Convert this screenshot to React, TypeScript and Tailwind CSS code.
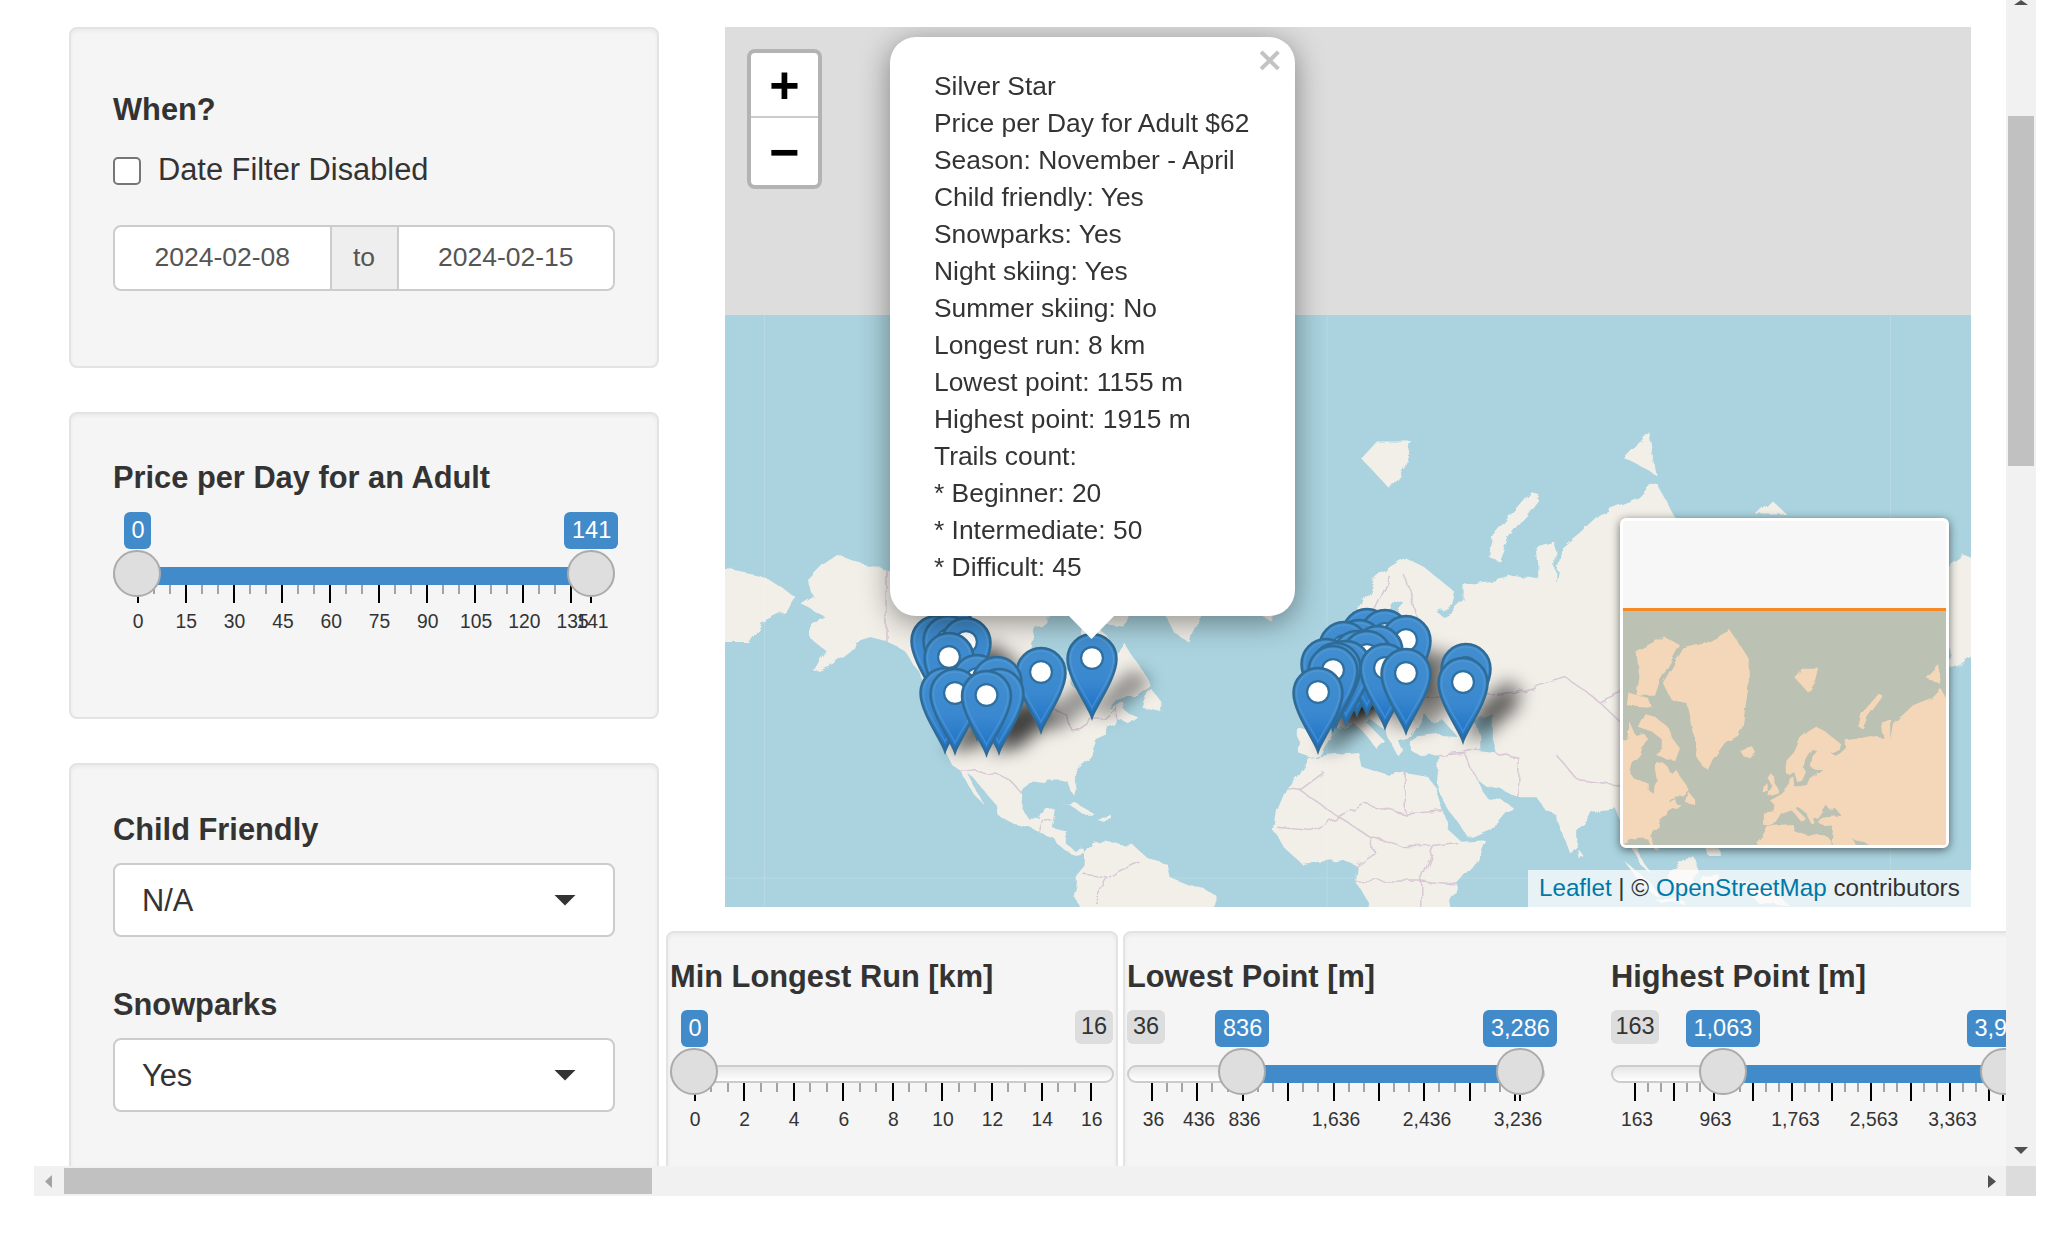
import React from "react";

type Pt = [number, number];

const LAND: Pt[][] = [
  // north america
  [[-168,65.5],[-164,66.5],[-166,68.5],[-161,70.3],[-156.5,71.3],[-150,70.5],[-141,69.7],[-135,69.3],[-128,70],[-120,69.5],[-115,68],[-108,68],[-100,68],[-96,68],[-94,72],[-90,69],[-85,69.5],[-82,68],[-86,66],[-88,64],[-93,62],[-94.5,59],[-92,57],[-85,55.3],[-82,55],[-82,52.5],[-79.5,51.3],[-79,54.5],[-77,56.5],[-78,60],[-78,62.5],[-73,62],[-70,60.8],[-68,58.5],[-65,60],[-62,57.5],[-58,54.5],[-56,52],[-60,50],[-66,50],[-70,47],[-65,49],[-64.5,47],[-61,46],[-64,44.5],[-67,45],[-70,43.5],[-70.5,41.7],[-74,40.5],[-75.5,37.5],[-76,35],[-81,31.5],[-80,27],[-80.5,25.2],[-82,27],[-83,29.5],[-85.5,30],[-89.5,30],[-90,29],[-94,29.5],[-97.3,27.5],[-97.7,22],[-95.5,18.7],[-92,18.5],[-90.5,21],[-87,21.5],[-88,16],[-83.5,15],[-83.5,11],[-81,9],[-78,9.4],[-77.3,8],[-80,7.5],[-83,8.3],[-85.5,10],[-87.5,13],[-92,14.5],[-95,16],[-100,17],[-105,19.5],[-105.5,22.5],[-109,26],[-112.5,30],[-114.7,31.5],[-112,27],[-109.8,23],[-112,25],[-115,29],[-117.2,32.5],[-120.5,34.5],[-122.5,37.8],[-124.3,40.5],[-124,46],[-123,49],[-128,52],[-130.5,55],[-135,58.5],[-140,60],[-146,60.8],[-151,60],[-152,58.5],[-158,56],[-164,54.7],[-160,58.5],[-165,60.5],[-165,63],[-161,64]],
  // arctic islands
  [[-62,66],[-65,62.5],[-70,62.8],[-78,64.5],[-73,66],[-73,68],[-80,70],[-89,71],[-85,73.5],[-78,73],[-70,71],[-67,68.5]],
  [[-117,69.5],[-105,68.7],[-101,69.5],[-105,73],[-115,73],[-118,71]],
  [[-125,72],[-120,71.5],[-116,73.5],[-122,74.5]],
  [[-90,76.5],[-78,76.5],[-75,78.5],[-62,82.3],[-72,83],[-90,81.8],[-88,79]],
  [[-96,75],[-80,74.7],[-82,76],[-95,77]],
  [[-117,75.5],[-106,75],[-105,76.5],[-116,76.5]],
  // greenland
  [[-73,78.3],[-68,76],[-58,75.5],[-54,70],[-51,67],[-52,64],[-48,61],[-44,60],[-41,63],[-33,67.5],[-25,69],[-22,71],[-20,75],[-18,78],[-18,81],[-30,83.5],[-45,82.5],[-60,82]],
  [[-59,47.7],[-53,46.8],[-53,49],[-56,51.5],[-58,49.5]],
  [[-24,65.5],[-22,64],[-18.5,63.4],[-14,65],[-16,66.5],[-21,66]],
  [[-85,22],[-80,23],[-74.5,20.2],[-78,20],[-82,22.5]],
  [[-74,19],[-69,19.5],[-68.5,18.5],[-72,18]],
  // south america
  [[-77.3,8],[-75,11],[-71.5,12.4],[-68,11],[-62,10.5],[-57,6],[-51,4.5],[-50,0],[-44,-2.5],[-39,-3.5],[-35,-6],[-35,-9],[-39,-14],[-76,-14],[-81,-6],[-80,-2],[-80,1],[-77.5,4]],
  // africa
  [[-6,35.8],[3,36.9],[10,37.3],[11,33.5],[20,31],[25,32],[32,31],[34.5,28],[37,21],[39,15],[43,11.5],[51,12],[48,5],[42,-2],[39,-7],[40.5,-15],[12,-17],[13.5,-8],[9,-1],[9.5,4],[5,6],[-4,5],[-8,4.5],[-13,9],[-17,14.7],[-16,21],[-13,27.5],[-9.5,31]],
  // eurasia
  [[-9,43],[-1.5,43.5],[-1,46],[-4.5,48.3],[-1,49.5],[3,51],[7,53.5],[8.5,55],[8.5,57],[10.5,57.5],[11,54],[14,54],[19,54.5],[21,57],[24,58],[29,60],[23,60],[21,61],[22,64],[25,65.5],[22,65.8],[18,63],[17,60.5],[18.5,59],[16,56],[13,55.5],[11,59],[8,58],[5,59],[5,62],[11,65],[15,68.5],[20,70],[25,71],[31,70],[41,67],[40,65.5],[35,64.5],[37,63.9],[40,64.5],[44,66],[44,68],[54,68.5],[60,69],[68,68.5],[67,72],[73,72.5],[73,68],[75,72],[81,73.5],[87,75],[100,76.3],[105,77.5],[113,74],[128,72.5],[132,71.5],[140,72.5],[150,71.5],[160,70],[170,69.7],[180,69],[190,66.5],[187,64.7],[179,63],[175,60],[165,60],[162,56],[156.5,51],[156,57],[160,61.5],[155,59.5],[143,59.5],[135,54.5],[141,53],[136,45],[130,42.5],[127.5,39.5],[129.5,37],[126.5,34.5],[125,39.5],[121,39],[118,39],[122,37],[119,35],[122,31],[120,26],[114,22.5],[108,21.5],[106,19],[109,13],[105,9],[100,13.5],[100,7],[103.5,1.5],[100.5,4],[98,9],[98,16],[94.5,16],[92,22],[87,21.5],[80,15],[80,11],[77.5,8],[73,20],[70,21],[67,25],[61,25],[56.5,27],[51,28],[48,30],[51,25],[56,24],[59.5,22],[55,17],[45,13],[43,16],[39,21],[35,28],[36,36.5],[30,36.3],[26.5,38],[26.5,40],[29,41],[36,41.5],[41.5,41.3],[37,45],[33.5,44.5],[31,46.5],[28,43],[26,40.7],[23,40],[24,38],[22.5,36.5],[19.5,41],[19,42.5],[14,45],[12.5,44.5],[18.5,40],[16,38],[12,42],[8.5,44.3],[3,43],[0,39.5],[-2,36.8],[-5.5,36],[-9,37]],
  [[-5.5,50],[1,51.2],[1.5,52.8],[-1.5,55],[-2,57.5],[-4,58.6],[-6,57],[-3,54],[-5,52]],
  [[-10,52],[-6,52.2],[-6,55],[-9,54.5]],
  [[11,79],[20,77],[25,78.5],[27,80],[16,80]],
  [[52,71],[55,70.7],[58,73],[68,76.5],[65,76.8],[54,73.5]],
  [[95,79],[105,78],[103,80.5]],
  [[137,75],[147,75],[142,76.2]],
  [[142,46],[144,49],[143,54],[142,53]],
  [[130,31.5],[132,34],[136,35],[140,35],[142,40],[141,41.5],[139,38],[133,35.5],[130,33.5]],
  [[140,42],[145,43.5],[142,45.5]],
  [[120,14],[122,18],[124,13],[126,7],[122,7]],
  [[109,1],[117,7],[119,1],[116,-4],[110,-3]],
  [[95,5.5],[104,-2],[106,-6],[101,-3]],
  [[105,-6.5],[114,-7],[114,-8.5],[106,-7.5]],
  [[120,1],[125,1.5],[122,-4],[120,-5]],
  [[131,-1],[141,-2.5],[148,-9],[138,-8]],
  [[80,9.5],[82,7],[80.5,6]],
  [[121,25],[122,24],[120.5,22]],
];

const CASPIAN: Pt[] = [[47,45],[53,46.5],[53,40],[54,37],[49,37.5],[49,41]];

const BORDERS: Pt[][] = [
  [[-123,49],[-95,49],[-89,48],[-83,46],[-82,43],[-79,43],[-75,45],[-71,45],[-67,47.5],[-67,45]],
  [[-141,69.7],[-141,60]],
  [[-117,32.5],[-106,31.7],[-101,29.5],[-97.5,26]],
  [[-92,14.5],[-91,18],[-88,18]],
  [[-13,27.5],[-8.7,27],[-1,32]],
  [[-8.7,27],[4,19],[12,23],[25,20],[25,32]],
  [[25,20],[37,21]],
  [[-16,16],[-5,15],[4,19]],
  [[4,19],[14,13],[15,8],[9,4]],
  [[14,13],[24,10],[34,10],[42,11]],
  [[34,10],[30,0],[30,-10]],
  [[9,-1],[30,-1],[42,-2]],
  [[12,59],[14,64],[20,69]],
  [[25,69],[30,62],[28,60]],
  [[2,51],[7,49],[8,47.5],[13,47.5],[17,48],[22,48],[28,45]],
  [[7,49],[7,53.5]],
  [[14,54],[15,51],[17,48]],
  [[24,54],[24,50],[22,48]],
  [[24,54],[28,56],[28,60]],
  [[-1.5,43],[3,42.5]],
  [[24,50],[30,50],[40,50],[38,47]],
  [[47,50],[60,51],[76,54],[87,49]],
  [[87,49],[98,52],[116,50],[120,47],[112,43],[96,43],[87,49]],
  [[74,36],[80,30],[97,28]],
  [[44,37],[46,33],[48,30]],
  [[61,25],[61,36],[54,37]],
  [[36,36.5],[44,37],[49,38]],
  [[-70,0],[-67,2],[-60,5]],
  [[-70,0],[-74,-8]],
  [[-78,1],[-70,0]],
];

type Proj = (p: Pt) => Pt;

// web mercator with the given pixels per world and origin
function mercator(world: number, x0: number, y0: number): Proj {
  return ([lon, lat]) => {
    const m = Math.log(Math.tan(Math.PI / 4 + (lat * Math.PI) / 360));
    return [x0 + (lon / 360) * world, y0 - (m * world) / (2 * Math.PI)];
  };
}

function toPath(points: Pt[], proj: Proj, dx: number, close: boolean) {
  const d = points
    .map((p, i) => {
      const [x, y] = proj([p[0] + dx, p[1]]);
      return `${i === 0 ? "M" : "L"}${x.toFixed(1)} ${y.toFixed(1)}`;
    })
    .join("");
  return close ? d + "Z" : d;
}

// pin tips in page coordinates, sorted so southern pins sit in front
const PINS: Pt[] = (
  [
    [936, 700], [966, 702], [948, 700], [950, 690], [949, 717], [977, 739], [997, 741], [945, 752], [955, 753], [999, 753], [986.5, 755], [1041, 732], [1092, 718],
    [1367, 693], [1385, 694], [1344, 706], [1359, 704], [1406, 700], [1378, 710], [1357, 715], [1367, 715], [1326, 723], [1346, 725], [1336, 727], [1333, 730], [1385, 728], [1466, 728], [1406, 733], [1463, 742], [1318, 752],
  ] as Pt[]
)
  .map(([x, y]): Pt => [x - 725, y - 27])
  .sort((a, b) => a[1] - b[1]);

const WORLD = mercator(1126, 1327 - 725, 878 - 27);
const MINI = mercator(563, 1776 - 1622, 890 - 611);

function MapBackground() {
  return (
    <svg className="absolute inset-0" width={1246} height={880}>
      <defs>
        <filter id="coast" x="0" y="288" width="1246" height="592" filterUnits="userSpaceOnUse">
          <feTurbulence type="fractalNoise" baseFrequency="0.07" numOctaves="2" seed="4" />
          <feDisplacementMap in="SourceGraphic" scale={9} />
          <feGaussianBlur stdDeviation="0.6" />
        </filter>
      </defs>
      <rect x={0} y={288} width={1246} height={592} fill="#aad3df" />
      <g filter="url(#coast)">
        {[-360, 0, 360].map((dx) => (
          <g key={dx}>
            {LAND.map((p, i) => (
              <path key={i} d={toPath(p, WORLD, dx, true)} fill="#f2efe9" />
            ))}
            <path d={toPath(CASPIAN, WORLD, dx, true)} fill="#aad3df" />
            {BORDERS.map((p, i) => (
              <path key={i} d={toPath(p, WORLD, dx, false)} fill="none" stroke="#d8c8d6" strokeWidth={1.5} />
            ))}
          </g>
        ))}
      </g>
      <path d="M39.5 288V880M602 288V880M1165.5 288V880M0 851H1246" stroke="#ffffff" strokeOpacity={0.15} />
    </svg>
  );
}

function Pin({ x, y }: { x: number; y: number }) {
  return (
    <g transform={`translate(${x - 26.5} ${y - 86})`}>
      <path
        d="M26.5 85C23 74 2 46 2 27A24.5 25 0 0 1 51 27C51 46 30 74 26.5 85Z"
        fill="url(#pinFill)"
        stroke="#2e6c97"
        strokeWidth={2.5}
      />
      <path
        d="M26.5 76C23 67 5 44 5 27A21.5 22 0 0 1 48 27C48 44 30 67 26.5 76Z"
        fill="none"
        stroke="#5ba0d8"
        strokeOpacity={0.5}
        strokeWidth={1.5}
      />
      <circle cx={26.5} cy={26} r={12} fill="#2f6f9f" />
      <circle cx={26.5} cy={26} r={9.8} fill="#ffffff" />
    </g>
  );
}

function Markers() {
  return (
    <svg className="absolute inset-0" width={1246} height={880}>
      <defs>
        <linearGradient id="pinFill" x1="0" y1="0" x2="0" y2="1">
          <stop offset="0" stopColor="#428ecf" />
          <stop offset="0.55" stopColor="#3a88cf" />
          <stop offset="1" stopColor="#1b70c6" />
        </linearGradient>
        <filter id="pinShadow" x="-20%" y="-20%" width="140%" height="140%">
          <feGaussianBlur stdDeviation="8" />
        </filter>
      </defs>
      <g filter="url(#pinShadow)" fill="#000000" fillOpacity={0.38}>
        {PINS.map(([x, y], i) => (
          <path key={i} transform={`translate(${x} ${y})`} d="M0 0L24 -4L60 -36L42 -50L18 -32Z" />
        ))}
      </g>
      {PINS.map(([x, y], i) => (
        <Pin key={i} x={x} y={y} />
      ))}
    </svg>
  );
}

function MiniMap() {
  return (
    <div className="absolute left-[895px] top-[491px] h-[330px] w-[329px] overflow-hidden rounded-[6px] border-[3px] border-white bg-[#f7f7f7] shadow-[0_2px_10px_rgba(0,0,0,0.55)]">
      <div className="h-[87px]" />
      <div className="h-[3px] bg-[#f58a25]" />
      <svg width={323} height={234} viewBox="0 3 323 234" className="block">
        <defs>
          <filter id="miniCoast" x="0" y="0" width="323" height="240" filterUnits="userSpaceOnUse">
            <feTurbulence type="fractalNoise" baseFrequency="0.07" numOctaves="2" seed="4" />
            <feDisplacementMap in="SourceGraphic" scale={5} />
            <feGaussianBlur stdDeviation="0.6" />
          </filter>
        </defs>
        <rect x={0} y={0} width={323} height={240} fill="#bbc1b3" />
        <g filter="url(#miniCoast)">
          {LAND.map((p, i) => (
            <path key={i} d={toPath(p, MINI, 0, true)} fill="#f4d6b8" />
          ))}
        </g>
      </svg>
    </div>
  );
}

function ZoomControl() {
  return (
    <div className="absolute left-[22px] top-[22px] flex h-[140px] w-[75px] flex-col overflow-hidden rounded-[8px] border-[4px] border-[#b3b3b3] bg-white font-['Liberation_Sans',sans-serif] font-bold text-black">
      <div className="flex h-[65px] items-center justify-center border-b-2 border-[#ccc] text-[52px] leading-none">+</div>
      <div className="flex flex-1 items-center justify-center text-[52px] leading-none">−</div>
    </div>
  );
}

const POPUP_LINES = [
  "Silver Star",
  "Price per Day for Adult $62",
  "Season: November - April",
  "Child friendly: Yes",
  "Snowparks: Yes",
  "Night skiing: Yes",
  "Summer skiing: No",
  "Longest run: 8 km",
  "Lowest point: 1155 m",
  "Highest point: 1915 m",
  "Trails count:",
  "* Beginner: 20",
  "* Intermediate: 50",
  "* Difficult: 45",
];

function Popup() {
  return (
    <div className="absolute left-[165px] top-[10px] h-[579px] w-[405px]">
      <div className="h-full rounded-[26px] bg-white pl-[44px] pt-[31px] text-[26.4px] leading-[37px] text-[#333] shadow-[0_6px_30px_rgba(0,0,0,0.42)]">
        {POPUP_LINES.map((line) => (
          <div key={line}>{line}</div>
        ))}
      </div>
      <span className="absolute right-[11px] top-[5px] font-['DejaVu_Sans',sans-serif] text-[34px] font-bold leading-[34px] text-[#c3c3c3]">×</span>
      <div className="absolute left-[179px] top-[579px] h-[23px] w-[45px] bg-white [clip-path:polygon(0_0,100%_0,50%_100%)]" />
    </div>
  );
}

function LeafletMap() {
  return (
    <div className="relative ml-[59px] h-[880px] w-[1246px] overflow-hidden bg-[#dddddd]">
      <MapBackground />
      <Markers />
      <MiniMap />
      <ZoomControl />
      <Popup />
      <div className="absolute bottom-0 right-0 flex h-[37px] w-[443px] items-center bg-white/70 pl-[11px] text-[24.2px] text-[#333]">
        <span className="text-[#0078a8]">Leaflet</span>
        <span className="whitespace-pre"> | © </span>
        <span className="text-[#0078a8]">OpenStreetMap</span>
        <span className="whitespace-pre"> contributors</span>
      </div>
    </div>
  );
}

type Badge = { x: number; w: number; text: string };
type SliderProps = {
  width: number;
  handles: number[];
  bar: [number, number];
  badges: Badge[];
  edges?: Badge[];
  majors: number[];
  minors: number[];
  labels: { x: number; text: string }[];
};

function makeTicks(start: number, step: number, count: number) {
  const majors = Array.from({ length: count }, (_, i) => start + step * i);
  const minors = majors.slice(0, -1).flatMap((m) => [m + step / 3, m + (2 * step) / 3]);
  return { majors, minors };
}

function RangeSlider({ width, handles, bar, badges, edges = [], majors, minors, labels }: SliderProps) {
  return (
    <div className="relative h-[125px] shrink-0" style={{ width }}>
      {edges.map((b) => (
        <div
          key={b.text}
          className="absolute top-0 flex h-[34px] items-center justify-center rounded-[6px] bg-[#dddddd] text-[23.5px] text-[#333]"
          style={{ left: b.x, width: b.w }}
        >
          {b.text}
        </div>
      ))}
      <div className="absolute left-0 right-0 top-[55px] h-[18px] rounded-[9px] border-2 border-[#cccccc] bg-gradient-to-b from-[#e6e6e6] to-white" />
      <div className="absolute top-[55px] h-[18px] bg-[#428bca]" style={{ left: bar[0], width: bar[1] - bar[0] }} />
      {minors.map((x) => (
        <div key={x} className="absolute top-[73px] h-[9px] w-[2px] bg-[#a3a3a3]" style={{ left: x - 1 }} />
      ))}
      {majors.map((x) => (
        <div key={x} className="absolute top-[73px] h-[18px] w-[2px] bg-black" style={{ left: x - 1 }} />
      ))}
      {labels.map((l) => (
        <div
          key={l.text}
          className="absolute top-[98px] -translate-x-1/2 whitespace-nowrap text-[19.3px] leading-[24px] text-[#333]"
          style={{ left: l.x }}
        >
          {l.text}
        </div>
      ))}
      {handles.map((x) => (
        <div
          key={x}
          className="absolute top-[38px] h-[47px] w-[48px] rounded-full border-2 border-[#ababab] bg-[#dedede]"
          style={{ left: x }}
        />
      ))}
      {badges.map((b) => (
        <div
          key={b.text}
          className="absolute top-0 flex h-[37px] items-center overflow-hidden whitespace-nowrap rounded-[6px] bg-[#428bca] pl-[8px] text-[23.5px] text-white"
          style={{ left: b.x, width: b.w }}
        >
          {b.text}
        </div>
      ))}
    </div>
  );
}

const priceTicks = makeTicks(24.5, 48.2, 10);
const runTicks = makeTicks(24.6, 49.56, 9);
const lowTicks = makeTicks(24.9, 45.4, 9);
const highTicks = makeTicks(23.7, 39.4, 10);

function Label({ children }: { children: React.ReactNode }) {
  return <div className="text-[30.8px] font-bold leading-[43px] text-[#333]">{children}</div>;
}

const wellClass = "shrink-0 rounded-[8px] border-2 border-[#e3e3e3] bg-[#f5f5f5] shadow-[inset_0_2px_4px_rgba(0,0,0,0.05)]";

function Select({ value }: { value: string }) {
  return (
    <div className="flex h-[74px] w-[502px] items-center justify-between rounded-[8px] border-2 border-[#cccccc] bg-white pl-[27px] pr-[37px] text-[30.8px] text-[#333]">
      <span className="pt-[2px]">{value}</span>
      <div className="h-[11px] w-[22px] bg-[#333] [clip-path:polygon(0_0,100%_0,50%_100%)]" />
    </div>
  );
}

function Sidebar() {
  return (
    <div className="flex w-[590px] shrink-0 flex-col gap-[44px]">
      <div className={`${wellClass} h-[341px] pl-[42px] pr-[42px] pt-[59px]`}>
        <Label>When?</Label>
        <div className="mt-[18px] flex h-[43px] items-center gap-[17px] text-[30.8px] text-[#333]">
          <input type="checkbox" className="h-[28px] w-[28px] appearance-none rounded-[5px] border-2 border-[#767676] bg-white" />
          Date Filter Disabled
        </div>
        <div className="mt-[33px] flex h-[66px] w-[502px] overflow-hidden rounded-[8px] border-2 border-[#cccccc] bg-white text-[26.5px] text-[#555]">
          <div className="flex flex-1 items-center justify-center">2024-02-08</div>
          <div className="flex w-[69px] items-center justify-center border-x-2 border-[#cccccc] bg-[#eeeeee]">to</div>
          <div className="flex flex-1 items-center justify-center">2024-02-15</div>
        </div>
      </div>
      <div className={`${wellClass} h-[307px] pl-[42px] pr-[42px] pt-[42px]`}>
        <Label>Price per Day for an Adult</Label>
        <div className="mt-[13px]">
          <RangeSlider
            width={501}
            handles={[0, 454]}
            bar={[30, 470]}
            badges={[
              { x: 10.5, w: 27, text: "0" },
              { x: 451, w: 54, text: "141" },
            ]}
            majors={[...priceTicks.majors, 478]}
            minors={priceTicks.minors}
            labels={[
              ...["0", "15", "30", "45", "60", "75", "90", "105", "120", "135"].map((text, i) => ({ x: 25 + 48.3 * i, text })),
              { x: 479.5, text: "141" },
            ]}
          />
        </div>
      </div>
      <div className={`${wellClass} h-[500px] pl-[42px] pr-[42px] pt-[43px]`}>
        <Label>Child Friendly</Label>
        <div className="mt-[12px]">
          <Select value="N/A" />
        </div>
        <div className="mt-[46px]">
          <Label>Snowparks</Label>
        </div>
        <div className="mt-[12px]">
          <Select value="Yes" />
        </div>
      </div>
    </div>
  );
}

function BottomCards() {
  return (
    <div className="mt-[24px] flex h-[300px] gap-[5px]">
      <div className={`${wellClass} w-[452px] px-[2px] pt-[22px]`}>
        <Label>Min Longest Run [km]</Label>
        <div className="mt-[12px]">
          <RangeSlider
            width={444}
            handles={[0]}
            bar={[0, 0]}
            badges={[{ x: 10.5, w: 27, text: "0" }]}
            edges={[{ x: 405, w: 38, text: "16" }]}
            majors={runTicks.majors}
            minors={runTicks.minors}
            labels={["0", "2", "4", "6", "8", "10", "12", "14", "16"].map((text, i) => ({ x: 25 + 49.6 * i, text }))}
          />
        </div>
      </div>
      <div className={`${wellClass} w-[1000px] pl-[2px] pt-[22px]`}>
        <div className="flex gap-[66px]">
          <div className="w-[418px] shrink-0">
            <Label>Lowest Point [m]</Label>
            <div className="mt-[12px]">
              <RangeSlider
                width={418}
                handles={[91, 369]}
                bar={[120, 390]}
                badges={[
                  { x: 88, w: 54, text: "836" },
                  { x: 356, w: 74, text: "3,286" },
                ]}
                edges={[{ x: 0, w: 38, text: "36" }]}
                majors={[...lowTicks.majors, 393]}
                minors={lowTicks.minors}
                labels={[
                  { x: 26.5, text: "36" },
                  { x: 72, text: "436" },
                  { x: 117.5, text: "836" },
                  { x: 209, text: "1,636" },
                  { x: 300, text: "2,436" },
                  { x: 391, text: "3,236" },
                ]}
              />
            </div>
          </div>
          <div className="w-[420px] shrink-0">
            <Label>Highest Point [m]</Label>
            <div className="mt-[12px]">
              <RangeSlider
                width={420}
                handles={[88, 369]}
                bar={[115, 395]}
                badges={[
                  { x: 74.5, w: 74, text: "1,063" },
                  { x: 355.5, w: 74, text: "3,963" },
                ]}
                edges={[{ x: 0, w: 48, text: "163" }]}
                majors={[...highTicks.majors, 392.4]}
                minors={highTicks.minors}
                labels={[
                  { x: 26, text: "163" },
                  { x: 104.5, text: "963" },
                  { x: 184.5, text: "1,763" },
                  { x: 263, text: "2,563" },
                  { x: 341.5, text: "3,363" },
                ]}
              />
            </div>
          </div>
        </div>
      </div>
    </div>
  );
}

export default function App() {
  return (
    <div className="h-[1233px] w-[2054px] overflow-hidden bg-white font-['Liberation_Sans',Arial,sans-serif]">
      <div className="flex h-[1166px] w-[2036px]">
        <main className="flex min-w-0 flex-1 overflow-hidden pl-[69px] pt-[27px]">
          <Sidebar />
          <div className="ml-[7px] min-w-0 flex-1">
            <LeafletMap />
            <BottomCards />
          </div>
        </main>
        {/* vertical scrollbar */}
        <div className="relative w-[30px] shrink-0 bg-[#f1f1f1]">
          <div className="ml-[2px] mt-[116px] h-[350px] w-[26px] bg-[#c1c1c1]" />
          <div className="absolute left-[8px] top-0 h-[5px] w-[14px] bg-[#505050] [clip-path:polygon(50%_0,100%_100%,0_100%)]" />
          <div className="absolute bottom-[12px] left-[8px] h-[7px] w-[14px] bg-[#505050] [clip-path:polygon(0_0,100%_0,50%_100%)]" />
        </div>
      </div>
      {/* horizontal scrollbar */}
      <div className="ml-[34px] flex h-[30px] w-[2002px]">
        <div className="relative flex-1 bg-[#f1f1f1]">
          <div className="absolute left-[11px] top-[9px] h-[13px] w-[7px] bg-[#a3a3a3] [clip-path:polygon(100%_0,100%_100%,0_50%)]" />
          <div className="ml-[30px] mt-[2px] h-[26px] w-[588px] bg-[#c1c1c1]" />
          <div className="absolute right-[10px] top-[9px] h-[13px] w-[8px] bg-[#505050] [clip-path:polygon(0_0,100%_50%,0_100%)]" />
        </div>
        <div className="w-[30px] shrink-0 bg-[#dcdcdc]" />
      </div>
    </div>
  );
}
